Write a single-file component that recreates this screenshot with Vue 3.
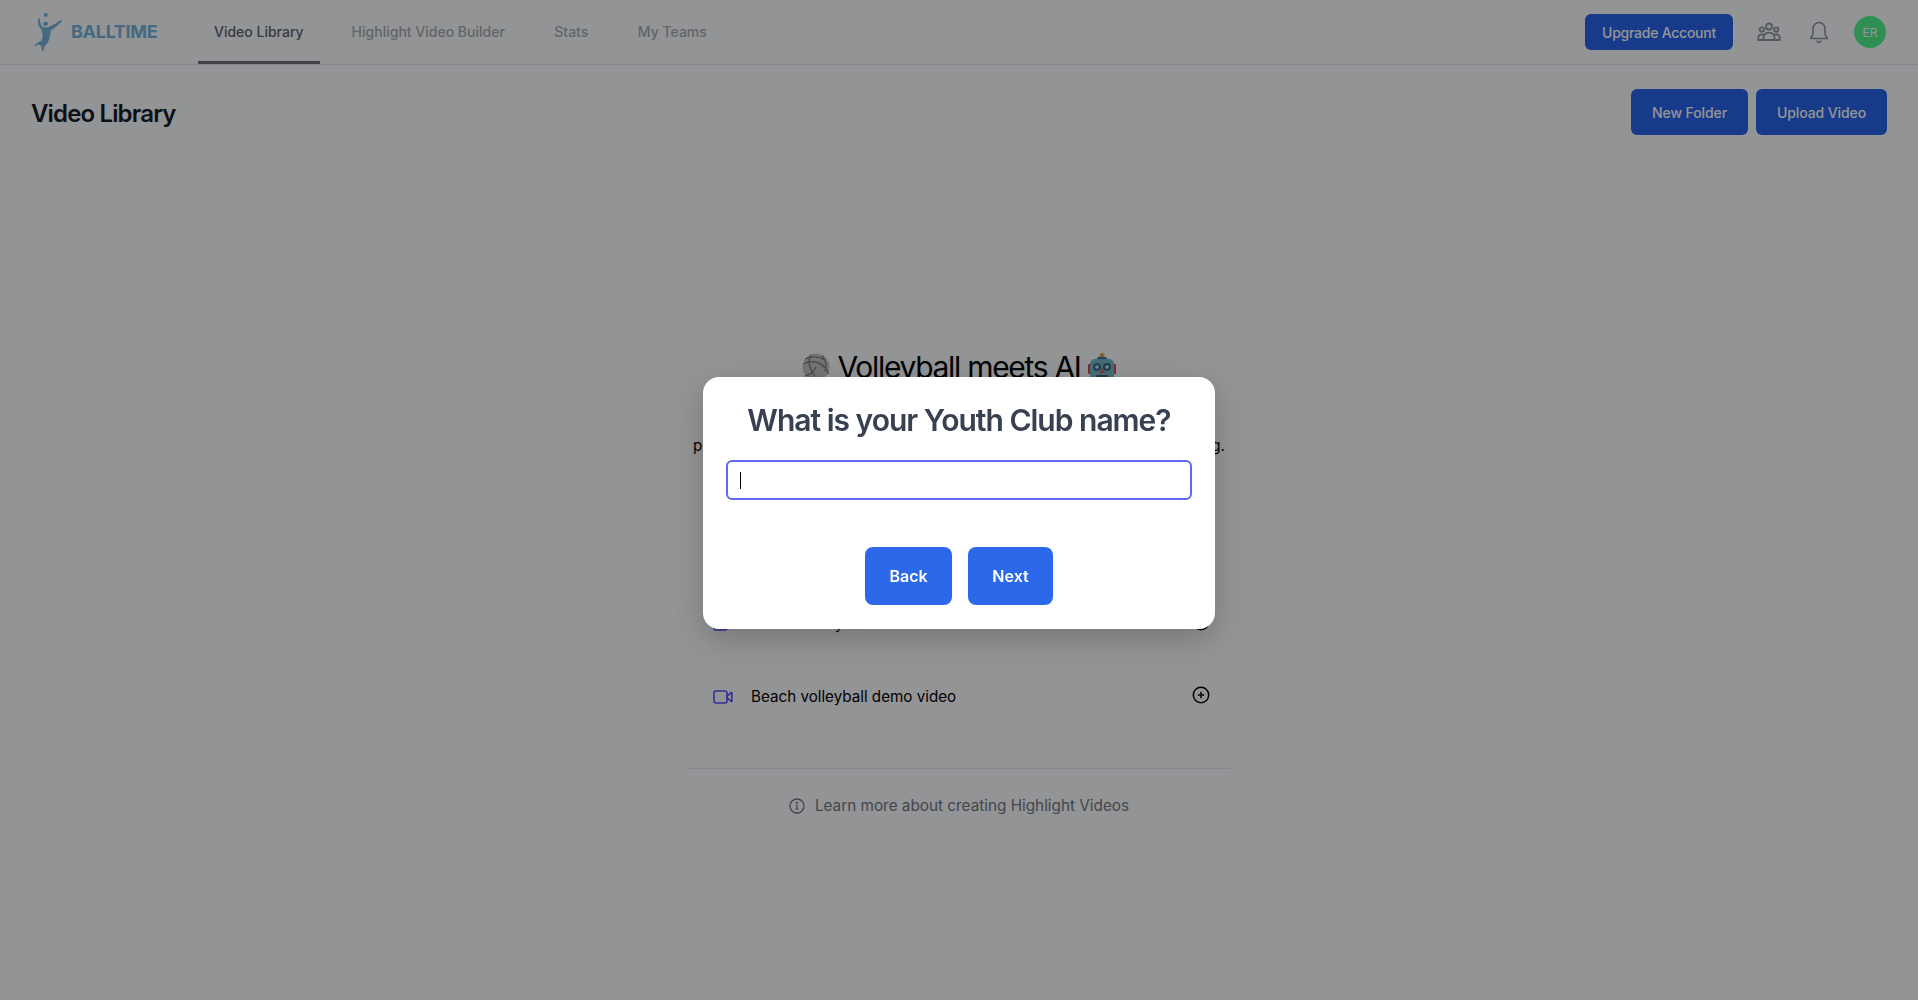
<script setup>
import { ref } from 'vue'

const tabs = ['Video Library', 'Highlight Video Builder', 'Stats', 'My Teams']
const clubName = ref('')
const demos = ['Indoor volleyball demo video', 'Beach volleyball demo video']
</script>

<template>
  <div class="page">
    <header class="topbar">
      <div class="brand">
        <svg class="logo" viewBox="0 0 30 42" fill="#75b5dc">
          <rect x="10.5" y="1" width="3.5" height="3.5" />
          <circle cx="12" cy="12" r="2.4" />
          <path d="M4 6.5 L5.6 6.2 L7 12.5 L9 15.5 L14.5 15.5 L22 12 L28 8 L29 9.2 L23.5 14.5 L17.5 19 L16.5 25 L14.500 31 L10.500 36 L9.500 41 L8 40 L7.800 35 L4.500 33.500 L1 35.500 L0.500 34 L5 30.500 L8 29.500 L9 23 L7.500 18 L4.500 13.500 Z" />
        </svg>
        <span class="brand-name">BALLTIME</span>
      </div>
      <nav class="tabs">
        <a v-for="(t, i) in tabs" :key="t" class="tab" :class="{ active: i === 0 }">{{ t }}</a>
      </nav>
      <div class="top-actions">
        <button class="btn upgrade">Upgrade Account</button>
        <svg class="group-ic" viewBox="0 0 24 24" fill="none" stroke="#92949e" stroke-width="1.8" stroke-linejoin="round">
          <circle cx="12" cy="6.500" r="3" />
          <circle cx="4.800" cy="9.500" r="2.200" />
          <circle cx="19.200" cy="9.500" r="2.200" />
          <path d="M6.500 20v-2.500c0-3 2.400-4.800 5.500-4.800s5.500 1.800 5.500 4.800V20z" />
          <path d="M6.500 20H1.200v-1.800c0-2.400 1.500-3.800 3.600-3.800 .8 0 1.500.2 2.100.5M17.500 20h5.300v-1.800c0-2.400-1.500-3.800-3.600-3.800-.8 0-1.500.2-2.100.5" />
        </svg>
        <svg class="bell-ic" viewBox="0 0 24 24" fill="none" stroke="#92949e" stroke-width="1.600" stroke-linecap="round" stroke-linejoin="round">
          <path d="M3.500 18.500c1.500-1.400 2.500-3.500 2.500-6.500V8.500a6 6 0 0 1 12 0V12c0 3 1 5.100 2.500 6.500z" />
          <path d="M10 21c.5 1 1.200 1.400 2 1.400s1.500-.4 2-1.400" />
        </svg>
        <div class="avatar">ER</div>
      </div>
    </header>

    <div class="title-row">
      <h1>Video Library</h1>
      <div class="title-actions">
        <button class="btn big new-folder">New Folder</button>
        <button class="btn big upload">Upload Video</button>
      </div>
    </div>

    <section class="empty">
      <h2>
        <svg class="emoji" viewBox="0 0 28 28">
          <circle cx="14" cy="14" r="13.500" fill="#c8c8c8" />
          <path d="M3 6c6-3 14-3 20 1M1.500 11c7-4 15-3 21 3 2 2 3.500 4 4 7M14 14c-2 4-6 8-11 9M9 1.500c-3 6-2 12 1 17l3 5M20 2.500c4 5 5 11 3 16" fill="none" stroke="#7d7d7d" stroke-width="1.300" />
        </svg>
        <span>Volleyball meets AI</span>
        <svg class="emoji" viewBox="0 0 28 28">
          <circle cx="14" cy="2.500" r="2.500" fill="#e8a53a" />
          <rect x="9" y="4" width="10" height="3" rx="1.500" fill="#3e6fa8" />
          <rect x="0" y="11" width="3" height="10" rx="1" fill="#d8474a" />
          <rect x="25" y="11" width="3" height="10" rx="1" fill="#d8474a" />
          <rect x="2" y="6" width="24" height="22" rx="5" fill="#74bccb" />
          <circle cx="9" cy="14" r="4" fill="#3b6f84" />
          <circle cx="19" cy="14" r="4" fill="#3b6f84" />
          <circle cx="9" cy="14" r="1.800" fill="#c6ebf2" />
          <circle cx="19" cy="14" r="1.800" fill="#c6ebf2" />
          <path d="M14 15l2.500 5h-5z" fill="#e2574c" />
          <rect x="8" y="22" width="12" height="4" rx="1" fill="#4a5a64" />
        </svg>
      </h2>
      <p class="lead">players get AI-powered stats and highlights for every match, zero tagging.</p>
      <ul class="demos">
        <li v-for="d in demos" :key="d" class="demo">
          <svg class="video-ic" viewBox="0 0 20 14" fill="none" stroke="#5050ff" stroke-width="1.600" stroke-linejoin="round">
            <rect x="1" y="1" width="13" height="12" rx="2" />
            <path d="M14 6l4.800-3.600v9.200L14 8z" />
          </svg>
          <span class="demo-name">{{ d }}</span>
          <svg class="plus-ic" viewBox="0 0 18 18" fill="none" stroke="#000" stroke-width="1.500">
            <circle cx="9" cy="9" r="7.700" />
            <path d="M9 5.800v6.400M5.800 9h6.400" />
          </svg>
        </li>
      </ul>
      <div class="learn">
        <svg class="info-ic" viewBox="0 0 16 16" fill="none" stroke="#767680" stroke-width="1.300">
          <circle cx="8" cy="8" r="7" />
          <path d="M8 7.200v4M6.800 7.200H8M6.800 11.200h2.400" />
          <circle cx="8" cy="4.800" r=".5" fill="#767680" />
        </svg>
        <span>Learn more about creating Highlight Videos</span>
      </div>
    </section>

    <div class="overlay">
      <div class="modal">
        <h3>What is your Youth Club name?</h3>
        <div class="field">
          <input v-model="clubName" type="text" class="club-input" />
          <i class="caret"></i>
        </div>
        <div class="modal-actions">
          <button class="modal-btn back">Back</button>
          <button class="modal-btn next">Next</button>
        </div>
      </div>
    </div>
  </div>
</template>

<style>
html, body {
  margin: 0;
  background: #fff;
}
</style>

<style scoped>
.page {
  height: 1000px;
  overflow: hidden;
  font-family: Inter, "Liberation Sans", sans-serif;
  color: #000;
}

.topbar {
  height: 64px;
  display: flex;
  align-items: center;
  padding-left: 34px;
  padding-right: 32px;
  border-bottom: 1px solid #e5e7eb;
}

.brand {
  display: flex;
  align-items: center;
  width: 164px;
}
.logo {
  width: 29px;
  height: 41px;
  margin-right: 8px;
  margin-top: 1px;
}
.brand-name {
  font-size: 18px;
  font-weight: 700;
  letter-spacing: -0.3px;
  color: #75b5dc;
  padding-bottom: 1px;
}

.tabs {
  display: flex;
  height: 100%;
  gap: 17.5px;
}
.tab {
  display: flex;
  align-items: center;
  padding: 0 16px 1px;
  font-size: 14px;
  font-weight: 500;
  color: #a8acb4;
  border-bottom: 3px solid transparent;
  border-top: 3px solid transparent;
}
.tab.active {
  color: #5f636c;
  border-bottom-color: #6e6e72;
  margin-right: -1.5px;
}

.top-actions {
  margin-left: auto;
  display: flex;
  align-items: center;
}
.btn {
  border: 0;
  background: #2563eb;
  color: #fff;
  font-family: inherit;
  font-weight: 500;
  font-size: 14px;
  letter-spacing: -0.1px;
}
.upgrade {
  width: 148px;
  height: 36px;
  border-radius: 6px;
  letter-spacing: -0.25px;
}
.group-ic {
  width: 24px;
  height: 24px;
  margin-left: 24px;
}
.bell-ic {
  width: 24px;
  height: 24px;
  margin-left: 26px;
}
.avatar {
  width: 32px;
  height: 32px;
  margin-left: 23px;
  border-radius: 50%;
  background: #4ff68c;
  color: #fff;
  font-size: 12px;
  display: flex;
  align-items: center;
  justify-content: center;
}

.title-row {
  display: flex;
  justify-content: space-between;
  align-items: flex-start;
  padding: 24px 31px 0;
}
h1 {
  margin: 0;
  font-size: 24px;
  line-height: 49px;
  font-weight: 600;
  letter-spacing: -0.85px;
  color: #111827;
}
.title-actions {
  display: flex;
  gap: 8px;
}
.big {
  height: 46px;
  border-radius: 6px;
}
.new-folder {
  width: 117px;
}
.upload {
  width: 131px;
}

.empty {
  width: 544px;
  margin: 211px auto 0;
  display: flex;
  flex-direction: column;
}
h2 {
  margin: 0;
  height: 36px;
  display: flex;
  align-items: center;
  justify-content: center;
  gap: 7px;
  font-size: 30px;
  line-height: 36px;
  font-weight: 400;
  letter-spacing: -1.3px;
}
.emoji {
  width: 28px;
  height: 28px;
  flex: none;
}
.lead {
  margin: 49px 0 0;
  font-size: 15.200px;
  line-height: 24px;
  white-space: nowrap;
  text-align: center;
}
.demos {
  list-style: none;
  margin: 129px 0 0;
  padding: 0 21px 0 26px;
}
.demo {
  height: 73px;
  display: flex;
  align-items: center;
}
.video-ic {
  width: 20px;
  height: 14px;
  margin-right: 18px;
}
.demo-name {
  font-size: 15.200px;
}
.plus-ic {
  width: 18px;
  height: 18px;
  margin-left: auto;
  margin-top: -4px;
}
.learn {
  margin-top: 35px;
  border-top: 1px solid #e5e7eb;
  padding-top: 25px;
  display: flex;
  align-items: center;
  justify-content: center;
  gap: 10px;
  font-size: 15.300px;
  line-height: 24px;
  color: #767680;
}
.info-ic {
  width: 16px;
  height: 16px;
}

.overlay {
  position: fixed;
  inset: 0;
  background: rgba(4, 6, 10, 0.43);
  display: flex;
  justify-content: center;
  align-items: flex-start;
  padding-top: 377px;
  box-sizing: border-box;
}
.modal {
  width: 512px;
  height: 252px;
  box-sizing: border-box;
  padding: 25px 23px 24px;
  background: #fff;
  border-radius: 16px;
  box-shadow: 0 10px 30px rgba(0, 0, 0, 0.2);
  display: flex;
  flex-direction: column;
}
h3 {
  margin: 0;
  font-size: 30px;
  line-height: 36px;
  font-weight: 600;
  letter-spacing: -1px;
  color: #374151;
  text-align: center;
  white-space: nowrap;
}
.field {
  position: relative;
  margin-top: 22px;
}
.club-input {
  display: block;
  width: 100%;
  height: 40px;
  box-sizing: border-box;
  border: 2px solid #6366f1;
  border-radius: 6px;
  outline: 0;
}
.caret {
  position: absolute;
  left: 14px;
  top: 12px;
  width: 1px;
  height: 17px;
  background: #000;
}
.modal-actions {
  display: flex;
  justify-content: center;
  gap: 16px;
  margin-top: 47px;
}
.modal-btn {
  height: 58px;
  border: 0;
  border-radius: 8px;
  background: #2b68ea;
  color: #fff;
  font-family: inherit;
  font-size: 16px;
  font-weight: 600;
}
.back {
  width: 87px;
}
.next {
  width: 85px;
}
</style>
